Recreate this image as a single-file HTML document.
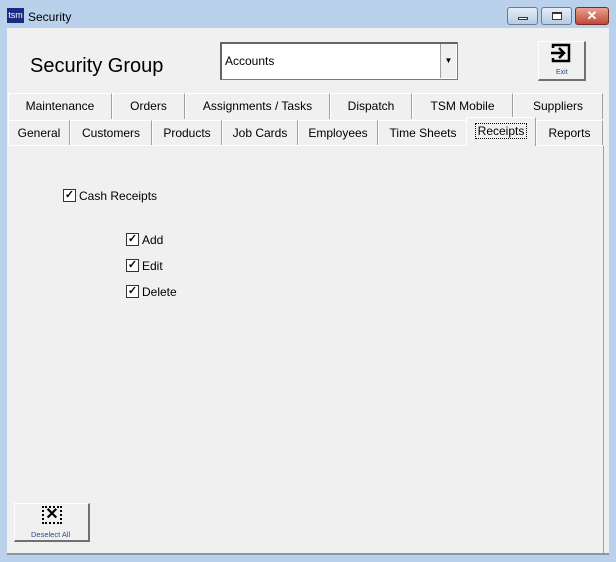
<!DOCTYPE html><html><head><style>
*{margin:0;padding:0;box-sizing:border-box}
body{width:616px;height:562px;background:#b9d1ea;font-family:"Liberation Sans",sans-serif;font-size:12px;position:relative;overflow:hidden}
.a{position:absolute}
.client{left:7px;top:28px;width:602px;height:527px;background:#f0f0f0;border-bottom:2px solid #8a96a4}
.tb{top:7px;height:18px;border:1px solid #6a7a90;border-radius:3px;background:linear-gradient(#e6eef8,#b8cbe2)}
.tab{position:absolute;height:26px;border-top:1px solid #fff;border-left:1px solid #fff;border-right:1px solid #a0a0a0;background:#f0f0f0;text-align:center;line-height:25px;font-size:12px;color:#000}
.cb{position:absolute;width:13px;height:13px;border:1px solid #333;background:#fff;font-size:11px;line-height:11px;text-align:center;font-weight:bold}
.lbl{position:absolute;font-size:12px}
.btn{position:absolute;background:#f0f0f0;border-top:1px solid #fff;border-left:1px solid #fff;border-right:2px solid #707070;border-bottom:2px solid #707070}
</style></head><body>
<div class="a" style="left:7px;top:8px;width:17px;height:15px;background:#1a2a80;color:#fff;font-size:9px;line-height:15px;text-align:center">tsm</div>
<div class="a" style="left:28px;top:10px;font-size:12px">Security</div>
<div class="a tb" style="left:507px;width:31px"><div class="a" style="left:10px;top:9px;width:10px;height:3px;border:1px solid #333;background:#fff"></div></div>
<div class="a tb" style="left:541px;width:31px"><div class="a" style="left:10px;top:4px;width:10px;height:8px;border:1px solid #333;border-top-width:2px;background:#fff"></div></div>
<div class="a tb" style="left:575px;width:34px;background:linear-gradient(#e8a090,#c24a36);border-color:#7a2a20;color:#fff;text-align:center;font-weight:bold;font-size:13px;line-height:16px">✕</div>
<div class="a client"></div>
<div class="a" style="left:30px;top:55px;font-size:20px;color:#000">Security Group</div>
<div class="a" style="left:220px;top:42px;width:238px;height:38px;background:#fff;border:1px solid #7a7a7a;border-top:2px solid #646464;border-left:2px solid #646464"></div>
<div class="a" style="left:225px;top:54px;font-size:12px">Accounts</div>
<div class="a" style="left:440px;top:44px;width:16px;height:34px;background:#f0f0f0;border-left:1px solid #a0a0a0;font-size:8px;text-align:center;line-height:34px">▼</div>
<div class="btn" style="left:538px;top:41px;width:48px;height:40px"></div>
<svg class="a" style="left:550px;top:42px" width="24" height="22" viewBox="0 0 24 22"><path d="M3 6V3h16v16H3v-3" fill="none" stroke="#000" stroke-width="2.5"/><path d="M1 11h12M9 6l5 5-5 5" fill="none" stroke="#000" stroke-width="2.5"/></svg>
<div class="a" style="left:556px;top:69px;font-size:7px;color:#2a4a8a">Exit</div>
<div class="tab" style="left:8px;top:93px;width:104px">Maintenance</div>
<div class="tab" style="left:112px;top:93px;width:73px">Orders</div>
<div class="tab" style="left:185px;top:93px;width:145px">Assignments / Tasks</div>
<div class="tab" style="left:330px;top:93px;width:82px">Dispatch</div>
<div class="tab" style="left:412px;top:93px;width:101px">TSM Mobile</div>
<div class="tab" style="left:513px;top:93px;width:90px">Suppliers</div>
<div class="tab" style="left:8px;top:120px;width:62px">General</div>
<div class="tab" style="left:70px;top:120px;width:82px">Customers</div>
<div class="tab" style="left:152px;top:120px;width:70px">Products</div>
<div class="tab" style="left:222px;top:120px;width:76px">Job Cards</div>
<div class="tab" style="left:298px;top:120px;width:80px">Employees</div>
<div class="tab" style="left:378px;top:120px;width:90px">Time Sheets</div>
<div class="tab" style="left:466px;top:117px;width:70px;height:29px;line-height:27px;z-index:2"><span style="outline:1px dotted #000;padding:0 2px">Receipts</span></div>
<div class="tab" style="left:536px;top:120px;width:67px">Reports</div>
<div class="a" style="left:8px;top:145px;width:596px;height:408px;border-top:1px solid #fff;border-right:1px solid #a0a0a0"></div>
<div class="cb" style="left:63px;top:189px">✓</div><div class="lbl" style="left:79px;top:189px">Cash Receipts</div>
<div class="cb" style="left:126px;top:233px">✓</div><div class="lbl" style="left:142px;top:233px">Add</div>
<div class="cb" style="left:126px;top:259px">✓</div><div class="lbl" style="left:142px;top:259px">Edit</div>
<div class="cb" style="left:126px;top:285px">✓</div><div class="lbl" style="left:142px;top:285px">Delete</div>
<div class="btn" style="left:14px;top:503px;width:76px;height:39px"></div>
<div class="a" style="left:42px;top:506px;width:20px;height:18px;border:2px dotted #000;text-align:center;font-size:16px;line-height:14px;font-weight:bold">✕</div>
<div class="a" style="left:31px;top:530px;font-size:7.5px;color:#2a4a8a">Deselect All</div>
</body></html>
